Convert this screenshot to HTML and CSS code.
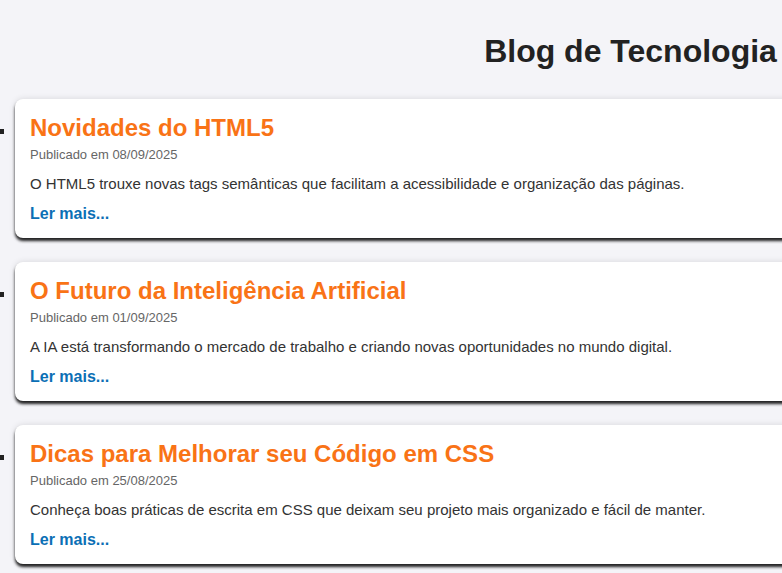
FILE: index.html
```html
<!DOCTYPE html>
<html lang="pt-BR">
<head>
<meta charset="utf-8">
<title>Blog de Tecnologia</title>
<link rel="stylesheet" href="styles.css">
</head>
<body>
<div class="page">
  <header class="site-header">
    <h1>Blog de Tecnologia</h1>
  </header>
  <ul class="posts">
    <li class="post-item">
      <article class="card">
        <h2 class="card-title">Novidades do HTML5</h2>
        <p class="card-date">Publicado em 08/09/2025</p>
        <p class="card-text">O HTML5 trouxe novas tags semânticas que facilitam a acessibilidade e organização das páginas.</p>
        <a class="card-link" href="#">Ler mais...</a>
      </article>
    </li>
    <li class="post-item">
      <article class="card">
        <h2 class="card-title">O Futuro da Inteligência Artificial</h2>
        <p class="card-date">Publicado em 01/09/2025</p>
        <p class="card-text">A IA está transformando o mercado de trabalho e criando novas oportunidades no mundo digital.</p>
        <a class="card-link" href="#">Ler mais...</a>
      </article>
    </li>
    <li class="post-item">
      <article class="card">
        <h2 class="card-title">Dicas para Melhorar seu Código em CSS</h2>
        <p class="card-date">Publicado em 25/08/2025</p>
        <p class="card-text">Conheça boas práticas de escrita em CSS que deixam seu projeto mais organizado e fácil de manter.</p>
        <a class="card-link" href="#">Ler mais...</a>
      </article>
    </li>
  </ul>
</div>
</body>
</html>
```
FILE: styles.css
```css
html, body {
  margin: 0;
  padding: 0;
  background: #f4f4f8;
}
body {
  font-family: "Liberation Sans", Arial, sans-serif;
  color: #222;
  overflow: hidden;
}
.page {
  width: 1261px;
}
.site-header {
  padding-top: 33px;
}
.site-header h1 {
  margin: 0;
  text-align: center;
  font-size: 32px;
  font-weight: bold;
  color: #222;
}
.posts {
  list-style: square;
  margin: 29px 0 0 0;
  padding-left: 15px;
  font-size: 16px;
  color: #222;
}
.post-item {
  margin-bottom: 24px;
}
.card {
  background: #fff;
  border-radius: 8px;
  padding: 15px;
  box-shadow: 0 0 6px rgba(0, 0, 0, 0.12), 0 3px 3px rgba(0, 0, 0, 0.85);
}
.card-title {
  margin: 0 0 5px 0;
  font-size: 24px;
  font-weight: bold;
  color: #f97316;
}
.card-date {
  margin: 0;
  font-size: 13px;
  color: #666;
}
.card-text {
  margin: 13px 0 13px 0;
  font-size: 15px;
  color: #333;
}
.card-link {
  display: inline-block;
  font-size: 16px;
  font-weight: bold;
  color: #0b6fb5;
  text-decoration: none;
}
```
